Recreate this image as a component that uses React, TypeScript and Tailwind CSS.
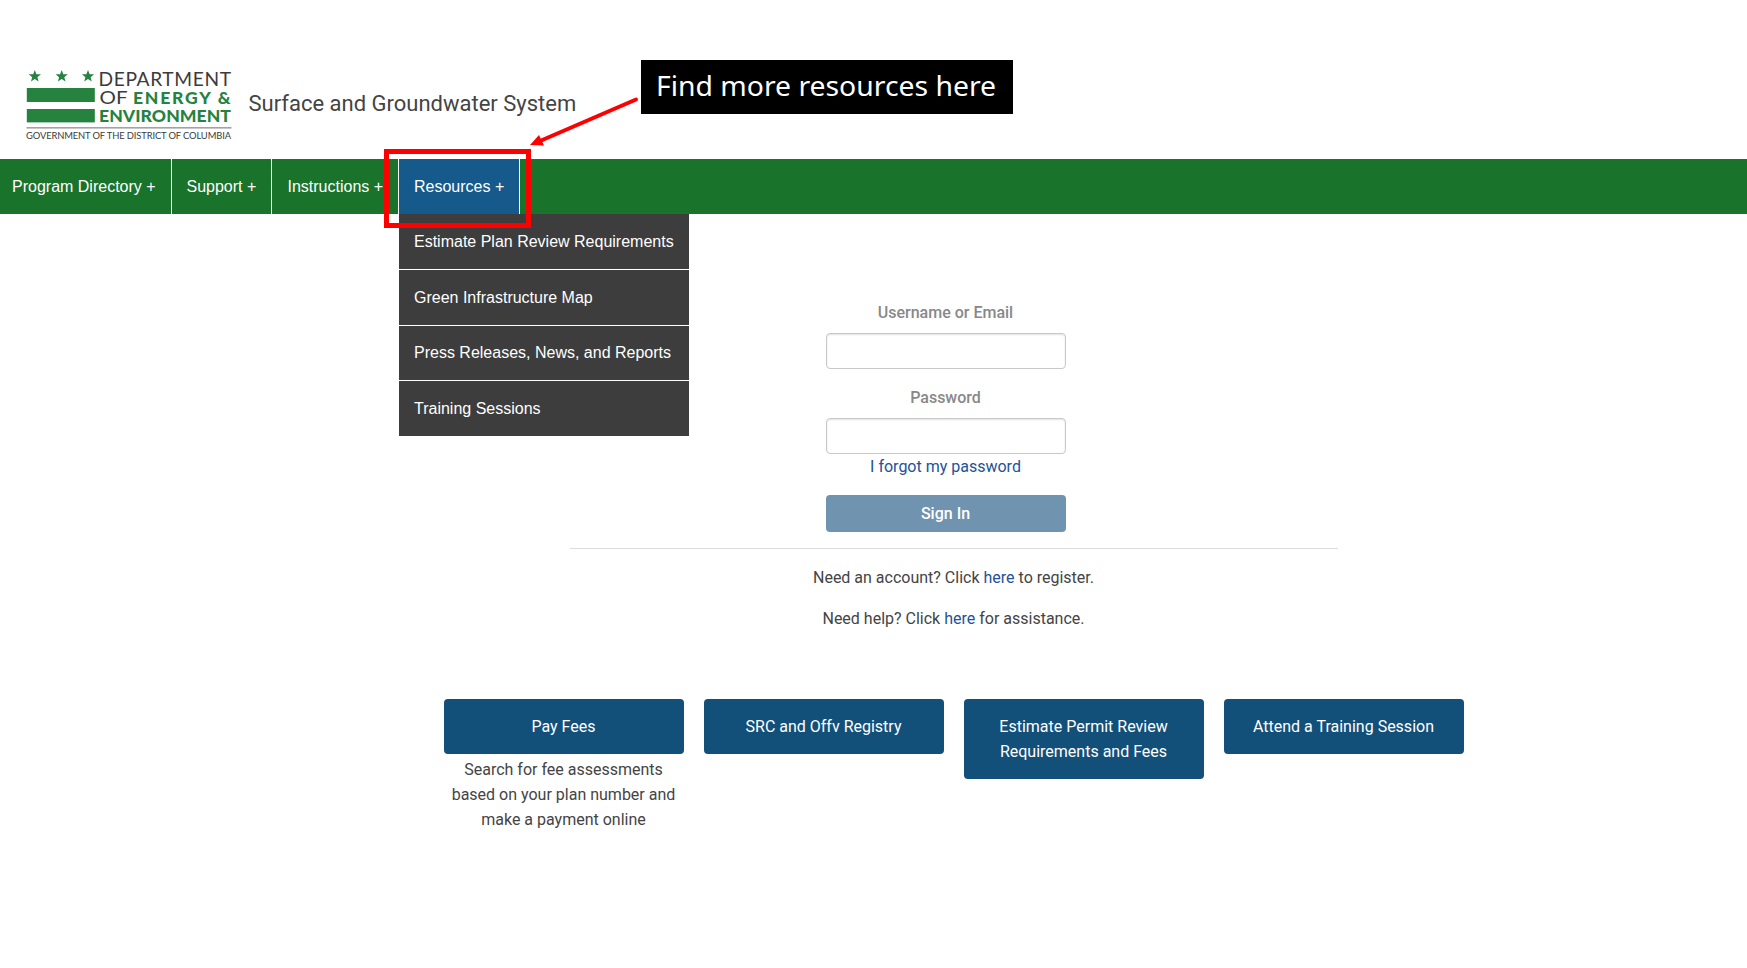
import React from "react";

const menuItems = [
  { label: "Estimate Plan Review Requirements", height: "h-[56px] border-b" },
  { label: "Green Infrastructure Map", height: "h-[56px] border-b" },
  { label: "Press Releases, News, and Reports", height: "h-[55px] border-b leading-[53px]" },
  { label: "Training Sessions", height: "h-[55px]" },
];

const STAR = "M0-6.4 1.6-2.1 6.1-2 2.6.9 3.8 5.2 0 2.7-3.8 5.2-2.6.9-6.1-2-1.6-2.1Z";

function Logo() {
  return (
    <svg width="206" height="74" viewBox="26 68 206 74" className="block overflow-visible" fontFamily="Lato, sans-serif">
      <g fill="#26833f">
        <path d={STAR} transform="translate(34.8 76.3)" />
        <path d={STAR} transform="translate(61.7 76.3)" />
        <path d={STAR} transform="translate(88 76.3)" />
        <rect x="26.8" y="88" width="68" height="14" />
        <rect x="26.8" y="109" width="68" height="13.4" />
      </g>
      <g fill="#3b3b3b">
        <text x="98.5" y="86" fontSize="19.2" textLength="132.5">DEPARTMENT</text>
        <text x="99.5" y="104" fontSize="18" textLength="28" lengthAdjust="spacingAndGlyphs">OF</text>
      </g>
      <g fill="#26833f" fontSize="17.6" fontWeight="900">
        <text x="133" y="103.7" textLength="97.5">ENERGY &amp;</text>
        <text x="99" y="122.4" textLength="132">ENVIRONMENT</text>
      </g>
      <rect x="26.5" y="127" width="205" height="1.6" fill="#a3a3a3" />
      <text x="26" y="139.1" fontSize="9.4" fill="#3b3b3b" textLength="205">
        GOVERNMENT OF THE DISTRICT OF COLUMBIA
      </text>
    </svg>
  );
}

function Header() {
  return (
    <header className="flex h-[159px] pl-[26px] pt-[68px]">
      <Logo />
      <h1 className="ml-[16.5px] mt-[22px] whitespace-nowrap text-[22px] leading-7 text-[#444]">Surface and Groundwater System</h1>
    </header>
  );
}

function Nav() {
  return (
    <nav className="flex h-[55px] whitespace-nowrap bg-[#1a732a] font-['Liberation_Sans',sans-serif] text-[16px] leading-[55px] text-white">
      <a className="w-[172px] border-r border-white pl-3">Program Directory +</a>
      <a className="w-[100px] border-r border-white pl-[14.5px]">Support +</a>
      <a className="w-[127px] border-r border-white pl-[15.5px]">Instructions +</a>
      <div className="relative w-[121px] border-r border-white bg-[#165a8c]">
        <a className="block pl-[15px]">Resources +</a>
        <ul className="absolute left-0 top-[55px] z-10 w-[290px] bg-[#3d3d3d]">
          {menuItems.map((m) => (
            <li key={m.label} className={`${m.height} border-white pl-[15px]`}>{m.label}</li>
          ))}
        </ul>
      </div>
    </nav>
  );
}

function Field({ label, type }: { label: string; type: string }) {
  return (
    <label className="flex flex-col text-center font-medium leading-6 text-[#888]">
      <span className="pr-px">{label}</span>
      <input type={type} className="mt-2 h-9 rounded-[4px] border border-[#c8c8c8] bg-white shadow-[inset_0_1px_2px_rgba(0,0,0,0.12)]" />
    </label>
  );
}

function SignIn() {
  return (
    <form className="ml-[826px] flex w-60 flex-col pt-[87px]">
      <Field label="Username or Email" type="text" />
      <div className="h-[17px]" />
      <Field label="Password" type="password" />
      <a className="pr-px text-center leading-[25px] text-[#23519b]">I forgot my password</a>
      <button type="button" className="mt-4 h-[37px] rounded-[4px] bg-[#7093b0] pr-px pt-px font-medium text-white">Sign In</button>
    </form>
  );
}

function Tile({ title, note }: { title: React.ReactNode; note?: React.ReactNode }) {
  return (
    <div>
      <button type="button" className="block w-full rounded-[4px] bg-[#124f79] py-[15px] pr-px leading-[25px] text-white">{title}</button>
      {note && <p className="pr-px pt-[3px] leading-[25px]">{note}</p>}
    </div>
  );
}

function Callout() {
  return (
    <>
      <div className="absolute left-[641px] top-[60px] flex h-[54px] w-[372px] items-center justify-center whitespace-nowrap bg-black font-['Noto_Sans',sans-serif] text-[28px] text-white">
        <svg width="342" height="54" className="block">
          <text x="0" y="36" fill="#fff" textLength="340" lengthAdjust="spacingAndGlyphs">Find more resources here</text>
        </svg>
      </div>
      <div className="absolute left-[384px] top-[149px] z-20 h-[79px] w-[147px] border-[5px] border-[#f00]" />
      <svg className="absolute left-[525px] top-[94px] z-20" width="116" height="56" viewBox="525 94 116 56">
        <path d="M636 99.5 540 141" stroke="#f00" strokeWidth="4" strokeLinecap="round" />
        <path d="M530 145 539 135 544 145.5Z" fill="#f00" />
      </svg>
    </>
  );
}

export default function App() {
  return (
    <div className="relative h-[968px] w-[1747px] overflow-hidden bg-white font-[Roboto,sans-serif] text-[16px] text-[#444]">
      <Header />
      <Nav />
      <main>
        <SignIn />
        <section className="ml-[570px] mt-4 w-[768px] border-t border-[#dcdcdc] pt-4 text-center leading-[25px]">
          <p className="pr-px">Need an account? Click <a className="text-[#23519b]">here</a> to register.</p>
          <p className="mt-4 pr-px">Need help? Click <a className="text-[#23519b]">here</a> for assistance.</p>
        </section>
        <section className="ml-[444px] mt-[68px] grid w-[1020px] grid-cols-4 gap-5 text-center">
          <Tile title="Pay Fees" note={<>Search for fee assessments<br />based on your plan number and<br />make a payment online</>} />
          <Tile title="SRC and Offv Registry" />
          <Tile title={<>Estimate Permit Review<br />Requirements and Fees</>} />
          <Tile title="Attend a Training Session" />
        </section>
      </main>
      <Callout />
    </div>
  );
}
